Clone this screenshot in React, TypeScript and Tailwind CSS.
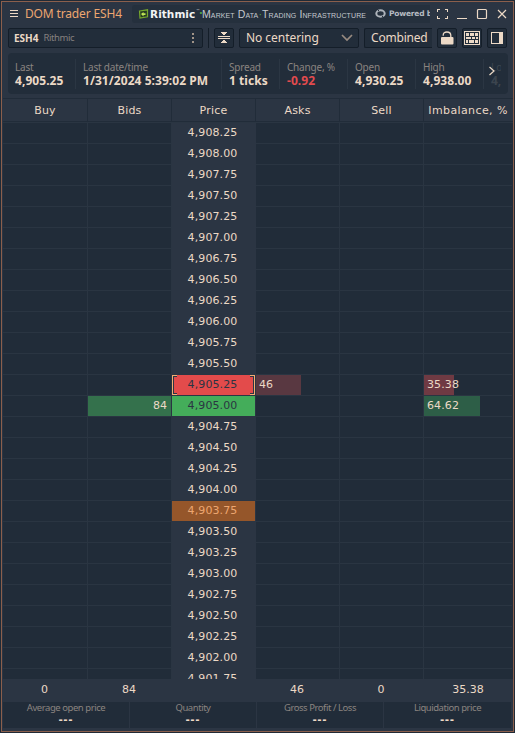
import React from "react";

const prices = Array.from({ length: 27 }, (_, i) => 4908.25 - i * 0.25);
const fmt = (n: number) => n.toLocaleString("en-US", { minimumFractionDigits: 2 });

const cols = "grid grid-cols-[85px_84px_84px_84px_84px_88px]";
const btn = "flex h-5 shrink-0 items-center rounded-[2px] border border-[#141e29] bg-[#222d3a]";

const stats = [
  { label: "Last", value: "4,905.25", box: "w-[61px]" },
  { label: "Last date/time", value: "1/31/2024 5:39:02 PM", box: "w-[139px]" },
  { label: "Spread", value: "1 ticks", box: "w-[51px]" },
  { label: "Change, %", value: "-0.92", box: "w-[61px]" },
  { label: "Open", value: "4,930.25", box: "w-[61px]" },
  { label: "High", value: "4,938.00", box: "w-[61px]" },
];

function TitleBar() {
  return (
    <div className="flex h-[22px] items-center pl-[6px] pt-[1px]">
      <svg width="10" height="10" viewBox="0 0 10 10" className="shrink-0" shapeRendering="crispEdges" fill="#ecd9c6">
        <path d="M1 1h8v1H1zM1 4h8v1H1zM1 7h8v1H1z" />
      </svg>
      <span className="ml-[6px] w-[107px] shrink-0 whitespace-nowrap text-[12px] leading-[18px] tracking-[-0.15px] text-[#eda670]">DOM trader ESH4</span>
      <div className="flex h-[18px] w-[298px] shrink-0 items-center overflow-hidden whitespace-nowrap rounded-l-[3px] bg-[#25303d] pl-[6px] font-['DejaVu_Sans']">
        <svg width="11" height="10" viewBox="0 0 11 10" className="shrink-0">
          <path d="M1.5 2l8-1.2v7L2 9z" fill="#273c22" stroke="#77a82d" strokeWidth="1.2" />
          <path d="M3 5l2.5-2v1.3h2v1.8h-2v1.3z" fill="#c1e755" />
        </svg>
        <span className="ml-[1px] w-[46px] shrink-0 text-[10.5px] font-bold leading-[18px] tracking-[0.05px] text-[#f2f3f4]">Rithmic</span>
        <span className="-mt-[5px] w-[3px] shrink-0 text-[4px] text-[#c7cbd0]">™</span>
        <span className="w-[3px] shrink-0 text-[10px] font-bold text-[#4da545]">·</span>
        <span className="w-[173px] shrink-0 font-['Liberation_Sans'] text-[10.5px] leading-[18px] tracking-[0.11px] text-[#c4c9cf] [font-variant:small-caps]">
          Market Data<span className="text-[#4da545]">·</span>Trading Infrastructure
        </span>
        <svg width="11" height="9" viewBox="0 0 11 9" className="shrink-0" fill="none" stroke="#aeb4bb" strokeWidth="2">
          <ellipse cx="5.5" cy="4.5" rx="4.2" ry="3.2" />
          <path d="M3 1l1 1M7 7l1 1" stroke="#25303d" strokeWidth="1" />
        </svg>
        <span className="ml-[3px] shrink-0 text-[7.5px] font-bold tracking-[-0.2px] text-[#b5bac1]">Powered by</span>
      </div>
      <svg width="75" height="14" viewBox="0 0 75 14" className="ml-[6px] shrink-0" shapeRendering="crispEdges" fill="none" stroke="#ecd9c6">
        <path d="M1.500 5V2.500H4M9 2.500h2.500V5M11.500 9v2.500H9M4 11.500H1.500V9" />
        <path d="M21 11.500h10" />
        <rect x="41.500" y="2.500" width="9" height="9" rx="1" shapeRendering="auto" strokeWidth="1.200" />
        <path d="M62 3l8 8M70 3l-8 8" shapeRendering="auto" strokeWidth="1.200" />
      </svg>
    </div>
  );
}

function Toolbar() {
  return (
    <div className="mt-[4px] flex h-5 items-center pl-[5px]">
      <div className={`${btn} w-[195px] pl-[5px] pr-[7px]`}>
        <span className="text-[10px] font-bold leading-none">ESH4</span>
        <span className="ml-[5px] text-[9.500px] leading-none tracking-[-0.4px] text-[#85807f]">Rithmic</span>
        <svg width="4" height="12" viewBox="0 0 4 12" className="ml-auto" fill="#a19488" shapeRendering="crispEdges">
          <path d="M1 1h2v2H1zM1 5h2v2H1zM1 9h2v2H1z" />
        </svg>
      </div>
      <div className="ml-[5px] h-5 w-px bg-[#141e29]" />
      <div className={`${btn} ml-[5px] w-5 justify-center`}>
        <svg width="14" height="14" viewBox="0 0 14 14" className="shrink-0" fill="#ecd9c6" shapeRendering="crispEdges">
          <path d="M1 5h12v1H1zM1 7h12v1H1zM4 1h6v1H9v1H8v1H6V3H5V2H4zM6 9h2v1h1v1h1v1H4v-1h1v-1h1z" />
        </svg>
      </div>
      <div className={`${btn} ml-[5px] w-[120px] pl-[6px] pr-[5px]`}>
        <span className="whitespace-nowrap text-[12px] leading-none tracking-[-0.05px]">No centering</span>
        <svg width="12" height="8" viewBox="0 0 12 8" className="ml-auto" fill="none" stroke="#988b80" strokeWidth="1.700">
          <path d="M1 1l5 5 5-5" />
        </svg>
      </div>
      <div className={`${btn} ml-[5px] w-[68px] rounded-r-none border-r-0 pl-[6px]`}>
        <span className="text-[12px] leading-none tracking-[-0.2px]">Combined</span>
      </div>
      <div className={`${btn} ml-[5px] w-5 justify-center`}>
        <svg width="14" height="14" viewBox="0 0 14 14" className="shrink-0">
          <rect x="1" y="6" width="12.500" height="7.500" rx="1" fill="#ecd9c6" />
          <path d="M3.200 4.800V4.200C3.200 2.200 4.700 1 6.900 1s3.900 1.400 3.900 3.600V7" fill="none" stroke="#ecd9c6" strokeWidth="1.300" />
        </svg>
      </div>
      <div className={`${btn} ml-[5px] w-5 justify-center`}>
        <svg width="16" height="14" viewBox="0 0 16 14" className="shrink-0" shapeRendering="crispEdges" fill="#ecd9c6">
          <path d="M0 0h16v1H0zM0 13h16v1H0zM0 0h1v14H0zM15 0h1v14h-1zM2 2h3v3H2zM6 2h4v3H6zM11 2h3v3h-3zM2 6h5v2H2zM8 6h3v2H8zM12 6h2v2h-2zM2 9h2v3H2zM5 9h5v3H5zM11 9h3v3h-3z" />
        </svg>
      </div>
      <div className={`${btn} ml-[5px] w-5 justify-center`}>
        <svg width="14" height="12" viewBox="0 0 14 12" className="shrink-0" shapeRendering="crispEdges">
          <path d="M1.500.5h11v11h-11z" fill="none" stroke="#ecd9c6" />
          <path d="M9 0h4v12H9z" fill="#ecd9c6" />
        </svg>
      </div>
    </div>
  );
}

function StatsBar() {
  return (
    <div className="relative ml-[5px] mt-[5px] flex h-[41px] w-[500px] shrink-0 items-center overflow-hidden rounded-[4px] bg-[#222d3a] pl-[7px]">
      {stats.map((s) => (
        <div key={s.label} className={`${s.box} mr-[7px] flex h-[30px] shrink-0 flex-col whitespace-nowrap border-r border-[#2b3643]`}>
          <span className="pt-[1px] text-[10px] leading-[14px] tracking-[-0.2px] text-[#8b8480]">{s.label}</span>
          <span className={`text-[12px] font-bold leading-[14px] tracking-[0.05px] ${s.value === "-0.92" ? "text-[#e34b4e]" : ""}`}>{s.value}</span>
        </div>
      ))}
      <div className="flex h-[30px] w-[10px] shrink-0 flex-col overflow-hidden whitespace-nowrap text-[#3c454f]">
        <span className="pt-[1px] text-[10px] leading-[14px]">Low</span>
        <span className="text-[12px] font-bold leading-[14px]">4,902.00</span>
      </div>
      <svg width="8" height="10" viewBox="0 0 8 10" className="absolute right-[12px] top-[13px]" fill="none" stroke="#ecd9c6" strokeWidth="1.200">
        <path d="M1.500 1l4.500 4-4.500 4" />
      </svg>
    </div>
  );
}

const heads = ["Buy", "Bids", "Price", "Asks", "Sell", "Imbalance, %"];
const totals = ["0", "84", "", "46", "0", "35.38"];
const cell = "h-[21px] border-b border-r border-[#2a3542]";

function Row({ price }: { price: number }) {
  const ask = price === 4905.25;
  const bid = price === 4905;
  const mark = price === 4903.75;
  const tone = ask ? "bg-[#e34b4b] text-[#2b3543]" : bid ? "bg-[#44ad5a] text-[#2b3543]" : mark ? "bg-[#95562a] text-[#eda670]" : "";
  return (
    <div className={`${cols} shrink-0`}>
      <div className={cell} />
      <div className={`${cell} text-right leading-[20px]`}>
        {bid && <div className="h-5 bg-[#34714c] pr-[4px]">84</div>}
      </div>
      <div className="h-[21px] border-b border-r border-[#2b3543] bg-[#2b3543]">
        <div className={`relative h-5 pr-[2px] text-center leading-[20px] tracking-[0.1px] ${tone}`}>
          {fmt(price)}
          {ask && (
            <>
              <span className="absolute left-0 top-0 h-5 w-[5px] border border-r-0 border-[#f3ad72]" />
              <span className="absolute right-0 top-0 h-5 w-[5px] border border-l-0 border-[#f3ad72]" />
              <span className="absolute left-px top-px h-[18px] w-[4px] border border-r-0 border-[#2b3543]" />
              <span className="absolute right-px top-px h-[18px] w-[4px] border border-l-0 border-[#2b3543]" />
            </>
          )}
        </div>
      </div>
      <div className={`${cell} leading-[20px]`}>{ask && <div className="h-5 w-[45px] bg-[#593841] pl-[3px]">46</div>}</div>
      <div className={cell} />
      <div className={`${cell} border-r-0 leading-[20px]`}>
        {ask && <div className="h-5 w-[30px] bg-[#6f3a43] pl-[3px] tracking-[0.1px]">35.38</div>}
        {bid && <div className="h-5 w-[56px] bg-[#2d5e47] pl-[3px] tracking-[0.1px]">64.62</div>}
      </div>
    </div>
  );
}

export default function App() {
  return (
    <div className="h-[733px] w-[515px] overflow-hidden bg-[#202a36] p-px font-['Noto_Sans',sans-serif] text-[#ecd9c6]">
      <div className="flex h-[731px] w-[513px] flex-col border border-[#8b5f4c] bg-[#2b3543] pl-px">
        <TitleBar />
        <Toolbar />
        <StatsBar />
        <div className={`${cols} mt-[4px] h-6 shrink-0 border-y border-[#212c39] font-['DejaVu_Sans',sans-serif] text-[11px] leading-[23px]`}>
          {heads.map((h, i) => (
            <div key={h} className={`whitespace-nowrap text-center ${i < 5 ? "border-r border-[#212c39] tracking-[0.2px]" : "tracking-[0.4px]"}`}>{h}</div>
          ))}
        </div>
        <div className="flex h-[557px] shrink-0 flex-col overflow-hidden bg-[#212c39] font-['DejaVu_Sans',sans-serif] text-[11px]">
          <div className="h-px shrink-0 bg-[#2a3542]" />
          {prices.map((p) => <Row key={p} price={p} />)}
        </div>
        <div className={`${cols} h-[23px] shrink-0 font-['DejaVu_Sans',sans-serif] text-[11px] leading-[21px]`}>
          {totals.map((t, i) => <div key={i} className={`text-center ${i < 5 ? "pr-[2px]" : ""}`}>{t}</div>)}
        </div>
        <div className="grid h-[26px] w-[508px] grid-cols-4 bg-[#212c39]">
          {["Average open price", "Quantity", "Gross Profit / Loss", "Liquidation price"].map((l, i) => (
            <div key={l} className={`flex flex-col items-center ${i < 3 ? "border-r border-[#2b3543]" : ""}`}>
              <span className="whitespace-nowrap text-[9.500px] leading-[12px] tracking-[-0.45px] text-[#8b8480]">{l}</span>
              <span className="text-[12px] font-bold leading-[12px] tracking-[1px]">---</span>
            </div>
          ))}
        </div>
      </div>
    </div>
  );
}
